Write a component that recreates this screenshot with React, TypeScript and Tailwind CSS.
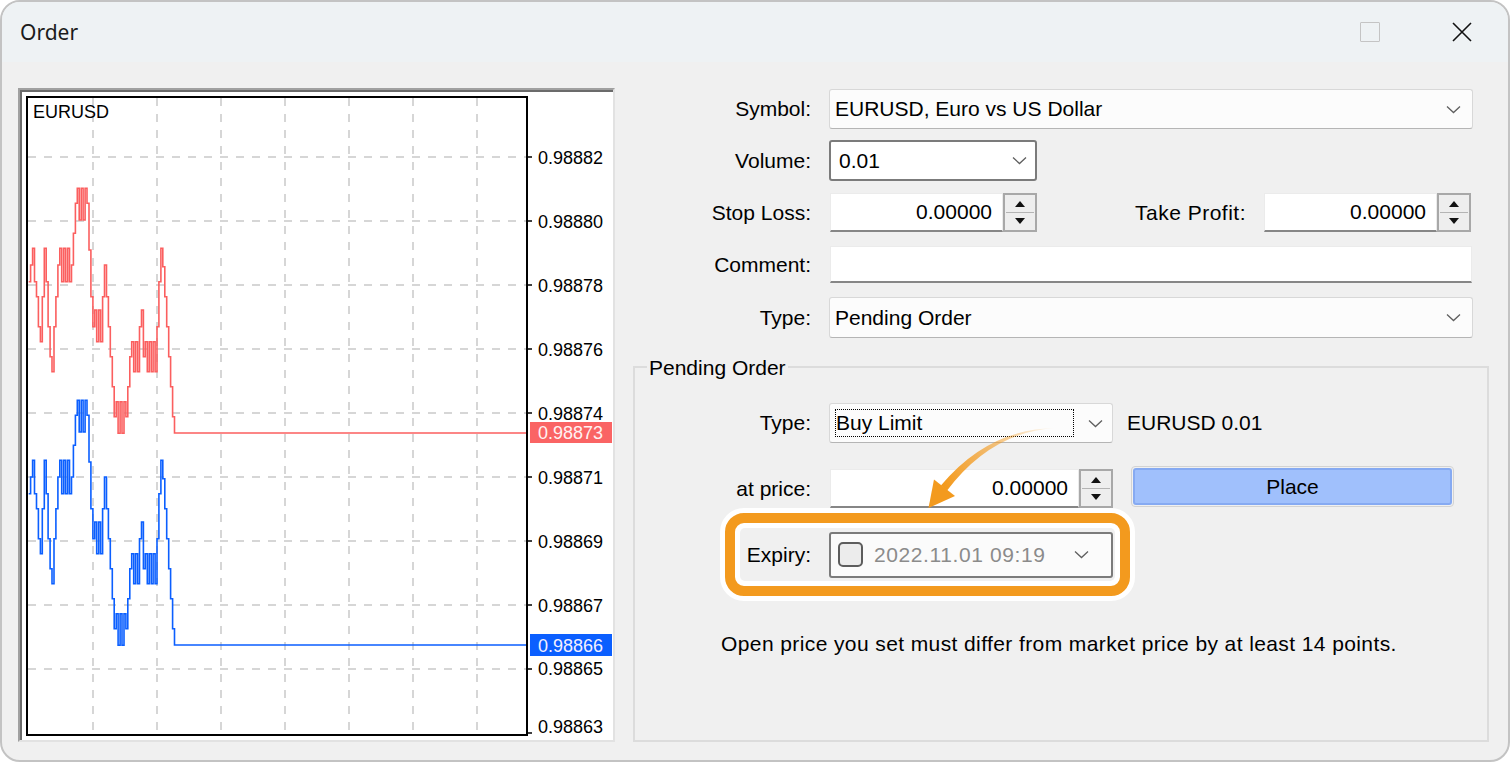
import React from 'react';

const seq = [
  305, 255, 205, 305, 350, 440, 485, 350, 205, 305, 440, 530, 575, 440, 350, 255, 205, 305, 205, 305, 205, 305,
  255, 160, 70, 25, 120, 25, 120, 25, 70, 210, 350, 440, 390, 485, 390, 485, 350, 255, 350, 440, 530, 620, 710,
  665, 760, 665, 760, 665, 710, 620, 530, 485, 575, 485, 575, 440, 390, 530, 485, 575, 485, 575, 485, 575, 440,
  305, 205, 260, 350, 440, 530, 620, 710, 757,
];

function seriesPath(offset: number, finalY: number) {
  const n = seq.length;
  const x0 = 28.7;
  const x1 = 174.5;
  let d = '';
  seq.forEach((z, i) => {
    const x = x0 + ((x1 - x0) * i) / (n - 1);
    const y = i === n - 1 ? finalY : 180 + z / 3 + offset;
    if (i === 0) d += `M${x.toFixed(1)} ${y.toFixed(1)}`;
    else d += ` H${x.toFixed(1)} V${y.toFixed(1)}`;
  });
  d += ' H527';
  return d;
}

const gridY = [157, 221, 285, 349, 413, 477, 541, 605, 669];
const gridX = [93, 157, 221, 285, 349, 413, 477];
const labels: [number, string, number][] = [
  [157, '0.98882', 164],
  [221, '0.98880', 228],
  [285, '0.98878', 292],
  [349, '0.98876', 356],
  [413, '0.98874', 420],
  [477, '0.98871', 484],
  [541, '0.98869', 548],
  [605, '0.98867', 612],
  [669, '0.98865', 675],
  [733, '0.98863', 733],
];

function Chart() {
  return (
    <svg width="591" height="648" viewBox="22 92 591 648" className="block">
      {gridY.map((y) => (
        <line key={'h' + y} x1="28" y1={y} x2="526" y2={y} stroke="#c9c9c9" strokeWidth="1.5" strokeDasharray="8 8" />
      ))}
      {gridX.map((x) => (
        <line key={'v' + x} x1={x} y1="98" x2={x} y2="734" stroke="#c9c9c9" strokeWidth="1.5" strokeDasharray="8 8" />
      ))}
      <path d={seriesPath(0, 433)} fill="none" stroke="#fb5f5f" strokeWidth="1.6" />
      <path d={seriesPath(212, 645)} fill="none" stroke="#0b5fff" strokeWidth="1.6" />
      <rect x="27" y="97" width="500" height="638" fill="none" stroke="#000" strokeWidth="2" />
      {labels.map(([y]) => (
        <line key={'t' + y} x1="528" y1={y} x2="532" y2={y} stroke="#000" strokeWidth="1.5" />
      ))}
      <g fontFamily="'Liberation Sans', Arial, sans-serif" fontSize="18" fill="#000">
        <text x="33" y="118">EURUSD</text>
        {labels.map(([y, t, b]) => (
          <text key={'l' + y} x="538" y={b}>
            {t}
          </text>
        ))}
      </g>
      <rect x="530" y="422" width="82" height="21" fill="#fa6464" />
      <text x="538" y="439" fontFamily="'Liberation Sans', Arial, sans-serif" fontSize="18" fill="#fff2f2">
        0.98873
      </text>
      <rect x="530" y="634" width="82" height="22" fill="#0b5fff" />
      <text x="538" y="652" fontFamily="'Liberation Sans', Arial, sans-serif" fontSize="18" fill="#f4f0ff">
        0.98866
      </text>
    </svg>
  );
}

function Chevron() {
  return (
    <svg width="15" height="9" viewBox="0 0 15 9" className="shrink-0">
      <path d="M1 1.5 L7.5 7.5 L14 1.5" fill="none" stroke="#5f5f5f" strokeWidth="1.3" />
    </svg>
  );
}

function Spinner() {
  return (
    <div className="w-[34px] h-full border-2 border-[#a8a8a8] bg-[#eeeeee] flex flex-col p-[1px] shrink-0">
      <div className="flex-1 flex items-center justify-center border-b border-[#b4b4b4]">
        <svg width="10" height="6" viewBox="0 0 10 6">
          <path d="M0 6 L5 0 L10 6 Z" fill="#111" />
        </svg>
      </div>
      <div className="flex-1 flex items-center justify-center">
        <svg width="10" height="6" viewBox="0 0 10 6">
          <path d="M0 0 L5 6 L10 0 Z" fill="#111" />
        </svg>
      </div>
    </div>
  );
}

function NumInput({ w }: { w: string }) {
  return (
    <div
      className={`${w} h-full bg-white border border-[#ebebeb] border-b-2 border-b-[#868686] flex items-center justify-end pr-[10px]`}
    >
      0.00000
    </div>
  );
}

export default function App() {
  return (
    <div className="relative w-[1510px] h-[762px] bg-white font-['Liberation_Sans',Arial,sans-serif] text-[21px] leading-[24px] text-black">
      <div className="w-full h-full rounded-[20px] border-2 border-[#c3c3c3] overflow-hidden bg-[#f0f0f0] flex flex-col">
        {/* Title bar */}
        <div className="h-[60px] shrink-0 bg-[#eef2f4] flex items-center justify-between pl-[18px] pr-[36px]">
          <span className="font-['Noto_Sans',sans-serif] text-[21px] text-[#1b1b1b]">Order</span>
          <div className="flex items-center gap-[72px]">
            <div className="w-[20px] h-[20px] border-[1.5px] border-[#c4c4c4] rounded-[1px]" />
            <svg width="20" height="20" viewBox="0 0 20 20">
              <path d="M1 1 L19 19 M19 1 L1 19" stroke="#111" strokeWidth="1.6" />
            </svg>
          </div>
        </div>

        {/* Body */}
        <div className="flex flex-1">
          {/* Chart panel */}
          <div className="ml-[16px] mt-[26px] w-[597px] h-[654px] border-2 border-t-[#a0a0a0] border-l-[#a0a0a0] border-r-[#e2e2e2] border-b-[#e2e2e2] shrink-0">
            <div className="w-full h-full border-t-2 border-l-2 border-[#6b6b6b] bg-white">
              <Chart />
            </div>
          </div>

          {/* Form */}
          <div className="ml-[18px] pt-[27px] w-[857px] flex flex-col">
            <div className="flex items-center h-[40px]">
              <div className="w-[178px] text-right">Symbol:</div>
              <div className="ml-[18px] w-[644px] h-full bg-[#fcfcfc] border border-[#d8d8d8] border-b-[#b5b5b5] rounded-[3px] flex items-center justify-between pl-[5px] pr-[11px]">
                <span>EURUSD, Euro vs US Dollar</span>
                <Chevron />
              </div>
            </div>

            <div className="flex items-center h-[41px] mt-[11px]">
              <div className="w-[178px] text-right">Volume:</div>
              <div className="ml-[18px] w-[208px] h-full bg-white border-2 border-[#7b7b7b] rounded-[3px] flex items-center justify-between pl-[8px] pr-[8px]">
                <span>0.01</span>
                <Chevron />
              </div>
            </div>

            <div className="flex items-center h-[39px] mt-[12px]">
              <div className="w-[178px] text-right">Stop Loss:</div>
              <div className="ml-[19px] flex h-full">
                <NumInput w="w-[173px]" />
                <Spinner />
              </div>
              <div className="w-[209px] text-right tracking-[0.5px]">Take Profit:</div>
              <div className="ml-[18px] flex h-full">
                <NumInput w="w-[173px]" />
                <Spinner />
              </div>
            </div>

            <div className="flex items-center h-[37px] mt-[14px]">
              <div className="w-[178px] text-right">Comment:</div>
              <div className="ml-[19px] w-[642px] h-full bg-white border border-[#ebebeb] border-b-2 border-b-[#868686]" />
            </div>

            <div className="flex items-center h-[41px] mt-[14px]">
              <div className="w-[178px] text-right">Type:</div>
              <div className="ml-[18px] w-[644px] h-full bg-[#fcfcfc] border border-[#d8d8d8] border-b-[#b5b5b5] rounded-[3px] flex items-center justify-between pl-[5px] pr-[11px]">
                <span>Pending Order</span>
                <Chevron />
              </div>
            </div>

            {/* Group box */}
            <div className="relative mt-[28px] w-[856px] h-[376px] border-2 border-[#dcdcdc] flex flex-col">
              <span className="absolute left-[12px] top-[-12px] px-[2px] bg-[#f0f0f0]">Pending Order</span>

              <div className="flex items-center h-[40px] mt-[35px]">
                <div className="w-[176px] text-right">Type:</div>
                <div className="ml-[18px] w-[284px] h-full bg-[#fcfcfc] border border-[#d8d8d8] border-b-[#b5b5b5] rounded-[3px] flex items-center pl-[5px] pr-[9px]">
                  <div className="w-[239px] h-[28px] border border-dotted border-black flex items-center">
                    <span>Buy Limit</span>
                  </div>
                  <div className="ml-auto">
                    <Chevron />
                  </div>
                </div>
                <div className="ml-[14px]">EURUSD 0.01</div>
              </div>

              <div className="flex items-center h-[39px] mt-[26px]">
                <div className="w-[176px] text-right">at price:</div>
                <div className="ml-[19px] flex h-full">
                  <NumInput w="w-[249px]" />
                  <Spinner />
                </div>
                <div className="ml-[18px] -mt-[3px] self-start w-[323px] h-[41px] rounded-[4px] border border-[#d3d3d3] p-[1px] bg-[#f0f0f0]">
                  <div className="w-full h-full bg-[#a0c0fc] border-2 border-[#86aaf2] rounded-[3px] flex items-center justify-center">
                    Place
                  </div>
                </div>
              </div>

              {/* Highlighted expiry */}
              <div className="ml-[85px] w-[415px] h-[93px] bg-white rounded-[24px] p-[5px]">
                <div className="w-full h-full border-[10px] border-[#f39a1e] rounded-[19px] bg-white p-[5px]">
                  <div className="w-full h-full bg-[#f0f0f0] rounded-[5px] flex items-center">
                    <div className="w-[71px] text-right">Expiry:</div>
                    <div className="ml-[18px] w-[284px] h-[46px] bg-[#fbfbfb] border-2 border-[#7b7b7b] rounded-[3px] flex items-center pl-[7px]">
                      <div className="w-[25px] h-[25px] border-2 border-[#5d5d5d] rounded-[5px] bg-[#ececec] shrink-0" />
                      <div className="ml-[11px] w-[176px] whitespace-nowrap text-[#8b8b8b] tracking-[0.6px]">
                        2022.11.01 09:19
                      </div>
                      <div className="ml-[24px]">
                        <Chevron />
                      </div>
                    </div>
                  </div>
                </div>
              </div>

              <div className="ml-[86px] mt-[31px] tracking-[0.4px]">
                Open price you set must differ from market price by at least 14 points.
              </div>
            </div>
          </div>
        </div>
      </div>

      {/* Annotation arrow */}
      <svg className="absolute left-0 top-0 pointer-events-none" width="1510" height="762" viewBox="0 0 1510 762">
        <defs>
          <linearGradient id="arrowGrad" gradientUnits="userSpaceOnUse" x1="1056" y1="428" x2="946" y2="488">
            <stop offset="0" stopColor="#f39a1e" stopOpacity="0" />
            <stop offset="0.45" stopColor="#f39a1e" stopOpacity="0.55" />
            <stop offset="1" stopColor="#f39a1e" stopOpacity="1" />
          </linearGradient>
        </defs>
        <path d="M1056 428 Q 991.6 431.5 947.1 490.5 L 940.9 485.5 Q 988.4 428.5 1056 428 Z" fill="url(#arrowGrad)" />
        <path d="M928.5 508 L 934 479.5 L 955 496 Z" fill="#f39a1e" />
      </svg>
    </div>
  );
}
